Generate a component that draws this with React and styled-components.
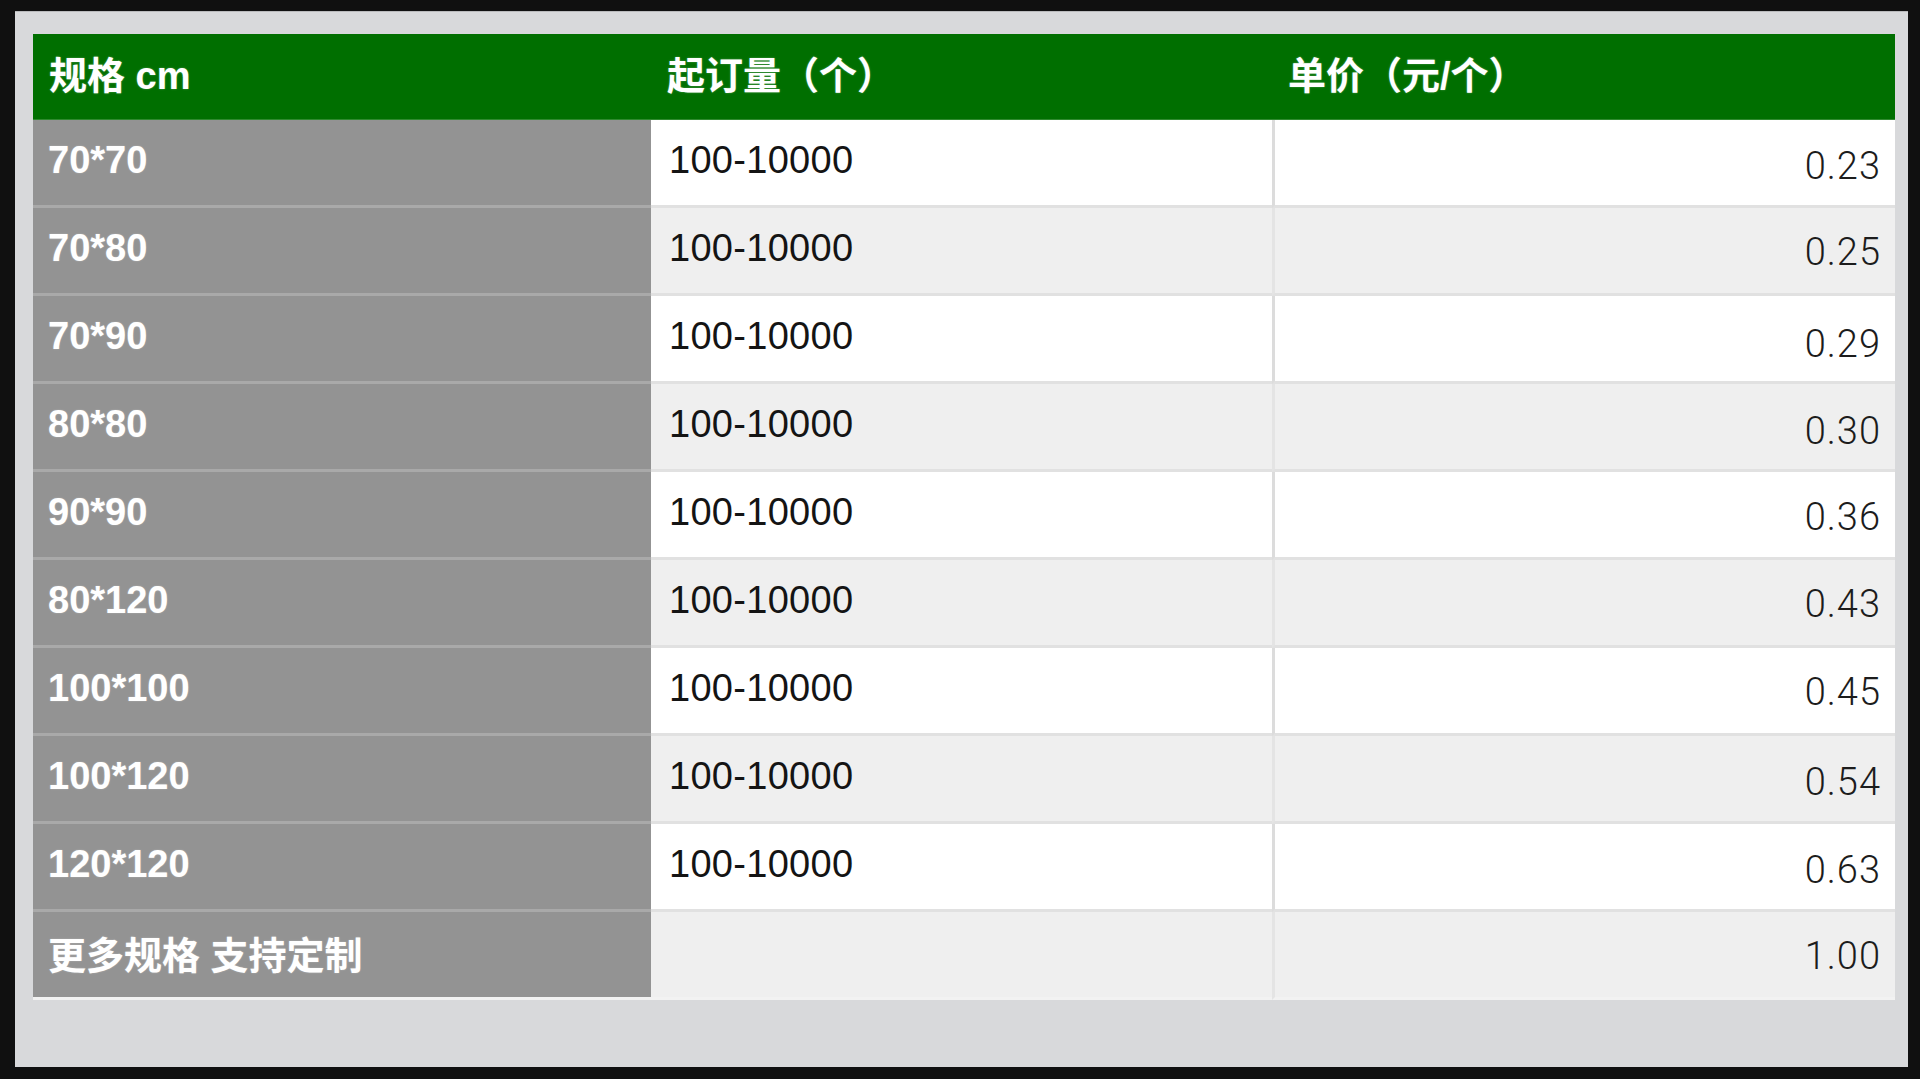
import styled, { createGlobalStyle } from 'styled-components'

const GlobalStyle = createGlobalStyle`
  html, body {
    margin: 0;
    padding: 0;
    background: #101010;
  }
  * {
    box-sizing: border-box;
  }
`

const rows = [
  { spec: '70*70', qty: '100-10000', price: '0.23', drop: 6 },
  { spec: '70*80', qty: '100-10000', price: '0.25', drop: 3 },
  { spec: '70*90', qty: '100-10000', price: '0.29', drop: 11 },
  { spec: '80*80', qty: '100-10000', price: '0.30', drop: 8 },
  { spec: '90*90', qty: '100-10000', price: '0.36', drop: 5 },
  { spec: '80*120', qty: '100-10000', price: '0.43', drop: 2 },
  { spec: '100*100', qty: '100-10000', price: '0.45', drop: 2 },
  { spec: '100*120', qty: '100-10000', price: '0.54', drop: 7 },
  { spec: '120*120', qty: '100-10000', price: '0.63', drop: 6 },
  { spec: '更多规格 支持定制', qty: '', price: '1.00', drop: 2 },
]

const App = () => {
  return (
    <>
      <GlobalStyle />
      <Frame>
        <Panel>
          <Table>
            <HeadRow>
              <HeadCell>规格 cm</HeadCell>
              <HeadCell>起订量（个）</HeadCell>
              <HeadCell>单价（元/个）</HeadCell>
            </HeadRow>
            {rows.map((row, i) => (
              <Row key={row.spec}>
                <SpecCell $last={i === rows.length - 1}>{row.spec}</SpecCell>
                <QtyCell $alt={i % 2 === 1} $last={i === rows.length - 1}>
                  {row.qty}
                </QtyCell>
                <PriceCell
                  $alt={i % 2 === 1}
                  $last={i === rows.length - 1}
                  $drop={row.drop}
                >
                  {row.price}
                </PriceCell>
              </Row>
            ))}
          </Table>
        </Panel>
      </Frame>
    </>
  )
}

export default App

const Frame = styled.div`
  width: 100vw;
  height: 100vh;
  padding: 11px 12px 12px 15px;
  display: flex;
  background: #101010;
`

const Panel = styled.div`
  flex: 1;
  background: #d8d9db;
  border-top: 1px solid #b9babc;
  padding: 22px 13px 0 18px;
`

const Table = styled.div`
  display: flex;
  flex-direction: column;
  font-family: "Liberation Sans", "Noto Sans CJK SC", Arial, sans-serif;
  font-size: 38px;
`

const HeadRow = styled.div`
  display: grid;
  grid-template-columns: 618px 621px 1fr;
  height: 86px;
  background: #006f00;
  border-bottom: 1px solid #2f8a2f;
`

const HeadCell = styled.div`
  display: flex;
  align-items: center;
  padding: 0 16px 8px;
  color: #fff;
  font-weight: bold;
  text-shadow: 0 0 2px rgba(255, 255, 255, 0.35);
`

const Row = styled.div`
  display: grid;
  grid-template-columns: 618px 621px 1fr;
  height: 88px;
`

const Cell = styled.div`
  display: flex;
  align-items: center;
  padding: 0 17px 4px 18px;
  border-bottom: 3px solid;
`

const SpecCell = styled(Cell)`
  background: #939393;
  border-bottom-color: ${(p) => (p.$last ? '#f2f2f2' : '#a9a9a9')};
  color: #fff;
  font-weight: bold;
  padding-left: 15px;
  text-shadow: 0 0 2px rgba(255, 255, 255, 0.3);
`

const QtyCell = styled(Cell)`
  background: ${(p) => (p.$alt ? '#efefef' : '#ffffff')};
  border-bottom-color: ${(p) => (p.$last ? '#f2f2f2' : '#e1e1e1')};
  color: #141414;
  letter-spacing: 0.3px;
`

const PriceCell = styled(Cell)`
  background: ${(p) => (p.$alt ? '#efefef' : '#ffffff')};
  border-bottom-color: ${(p) => (p.$last ? '#f2f2f2' : '#e1e1e1')};
  border-left: 3px solid ${(p) => (p.$alt ? '#e4e4e4' : '#dcdcdc')};
  justify-content: flex-end;
  padding-top: ${(p) => p.$drop}px;
  padding-bottom: 0;
  padding-right: 14px;
  color: #1c1c1c;
  font-family: "Roboto", "Liberation Sans", sans-serif;
  font-weight: 300;
  letter-spacing: 1px;
`
